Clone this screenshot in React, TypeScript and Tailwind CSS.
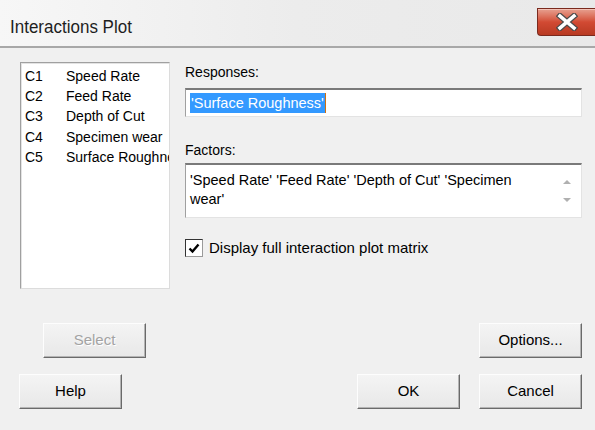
import React from "react";

const columns = [
  { id: "C1", name: "Speed Rate" },
  { id: "C2", name: "Feed Rate" },
  { id: "C3", name: "Depth of Cut" },
  { id: "C4", name: "Specimen wear" },
  { id: "C5", name: "Surface Roughness" },
];

function DlgButton({
  children,
  disabled,
  className = "",
}: {
  children: React.ReactNode;
  disabled?: boolean;
  className?: string;
}) {
  return (
    <button
      disabled={disabled}
      className={
        "w-[103px] h-[35px] text-[15px] bg-gradient-to-b from-[#f4f4f4] to-[#e8e8e8] border border-t-[#fdfdfd] border-l-[#fdfdfd] border-r-[#6a6a6a] border-b-[#6a6a6a] shadow-[inset_-1px_-1px_0_#b4b4b4] " +
        (disabled ? "text-[#a3a3a3] [text-shadow:1px_1px_0_#ffffff] " : "text-black ") +
        className
      }
    >
      {children}
    </button>
  );
}

function CloseButton() {
  return (
    <div className="w-[58px] h-[28px] mt-[8px] rounded-bl-[4px] border border-[#7a2a1e] border-r-0 bg-gradient-to-b from-[#e6a090] via-[#d24a33] to-[#b83a22] flex items-center justify-center shadow-[inset_0_1px_0_#f2c2b6]">
      <svg width="22" height="18" viewBox="0 0 22 18">
        <path d="M4 3 L18 15 M18 3 L4 15" stroke="#4a4a4a" strokeWidth="6" strokeLinecap="square" />
        <path d="M4 3 L18 15 M18 3 L4 15" stroke="#ffffff" strokeWidth="3.6" strokeLinecap="square" />
      </svg>
    </div>
  );
}

export default function App() {
  return (
    <div className="w-[595px] h-[430px] bg-[#f0f0f0] overflow-hidden font-['Liberation_Sans',Arial,sans-serif] text-black">
      {/* Title bar */}
      <div className="h-[48px] flex items-start justify-between bg-gradient-to-r from-[#f7f7f7] via-[#ececec] to-[#e9e9e9] border-b-2 border-[#a8a8a8]">
        <div className="pl-[10px] pt-[17px] text-[17px] leading-[20px] text-[#1e1e1e] scale-y-110 origin-left">
          Interactions Plot
        </div>
        <CloseButton />
      </div>

      {/* Body */}
      <div className="flex pt-[14px] pl-[20px]">
        {/* Column list */}
        <div className="w-[150px] h-[227px] bg-white border border-[#a0a0a0] border-b-[#dcdcdc] border-r-[#dcdcdc] shadow-[inset_1px_1px_0_#e3e3e3] overflow-hidden pt-[3px] pl-[4px]">
          {columns.map((c) => (
            <div key={c.id} className="flex h-[20.3px] items-center text-[14px] whitespace-nowrap">
              <span className="w-[41px] shrink-0">{c.id}</span>
              <span>{c.name}</span>
            </div>
          ))}
        </div>

        {/* Right side */}
        <div className="ml-[15px] w-[397px] flex flex-col">
          <div className="mt-[1px] text-[14px] leading-[18px]">Responses:</div>
          <div className="mt-[7px] h-[29px] bg-white border border-[#a0a0a0] border-t-[#7a7a7a] border-t-2 border-b-[#e3e3e3] border-r-[#e3e3e3] flex items-center pl-[4px]">
            <span className="bg-[#3399ff] text-white text-[14.5px] leading-[20px] px-[1px] border-r border-[#d07010]">
              'Surface Roughness'
            </span>
          </div>

          <div className="mt-[24px] text-[14px] leading-[18px]">Factors:</div>
          <div className="mt-[4px] h-[55px] bg-white border border-[#a0a0a0] border-t-[#7a7a7a] border-t-2 border-b-[#e3e3e3] border-r-[#e3e3e3] flex">
            <div className="flex-1 pl-[4px] pt-[6px] text-[14.5px] leading-[19px]">
              <div>'Speed Rate' 'Feed Rate' 'Depth of Cut' 'Specimen</div>
              <div>wear'</div>
            </div>
            <div className="w-[17px] flex flex-col items-center justify-between py-[14px] mr-[6px]">
              <svg width="8" height="5" viewBox="0 0 8 5">
                <path d="M0 5 L4 1 L8 5 Z" fill="#b0b0b0" />
              </svg>
              <svg width="8" height="5" viewBox="0 0 8 5">
                <path d="M0 0 L4 4 L8 0 Z" fill="#b0b0b0" />
              </svg>
            </div>
          </div>

          <label className="mt-[21px] flex items-center gap-[6px]">
            <span className="w-[18px] h-[18px] bg-white border border-[#333333] border-b-[#9a9a9a] border-r-[#9a9a9a] flex items-center justify-center">
              <svg width="12" height="11" viewBox="0 0 12 11">
                <path d="M1.5 5.5 L4.5 8.5 L10.5 1.5" stroke="#000000" strokeWidth="2.4" fill="none" />
              </svg>
            </span>
            <span className="text-[15px] leading-[18px]">Display full interaction plot matrix</span>
          </label>
        </div>
      </div>

      {/* Buttons */}
      <div className="flex justify-between mt-[34px] pl-[43px] pr-[13px]">
        <DlgButton disabled>Select</DlgButton>
        <DlgButton>Options...</DlgButton>
      </div>
      <div className="flex mt-[16px] pl-[19px] pr-[13px]">
        <DlgButton>Help</DlgButton>
        <div className="flex-1" />
        <DlgButton>OK</DlgButton>
        <DlgButton className="ml-[19px]">Cancel</DlgButton>
      </div>
    </div>
  );
}
